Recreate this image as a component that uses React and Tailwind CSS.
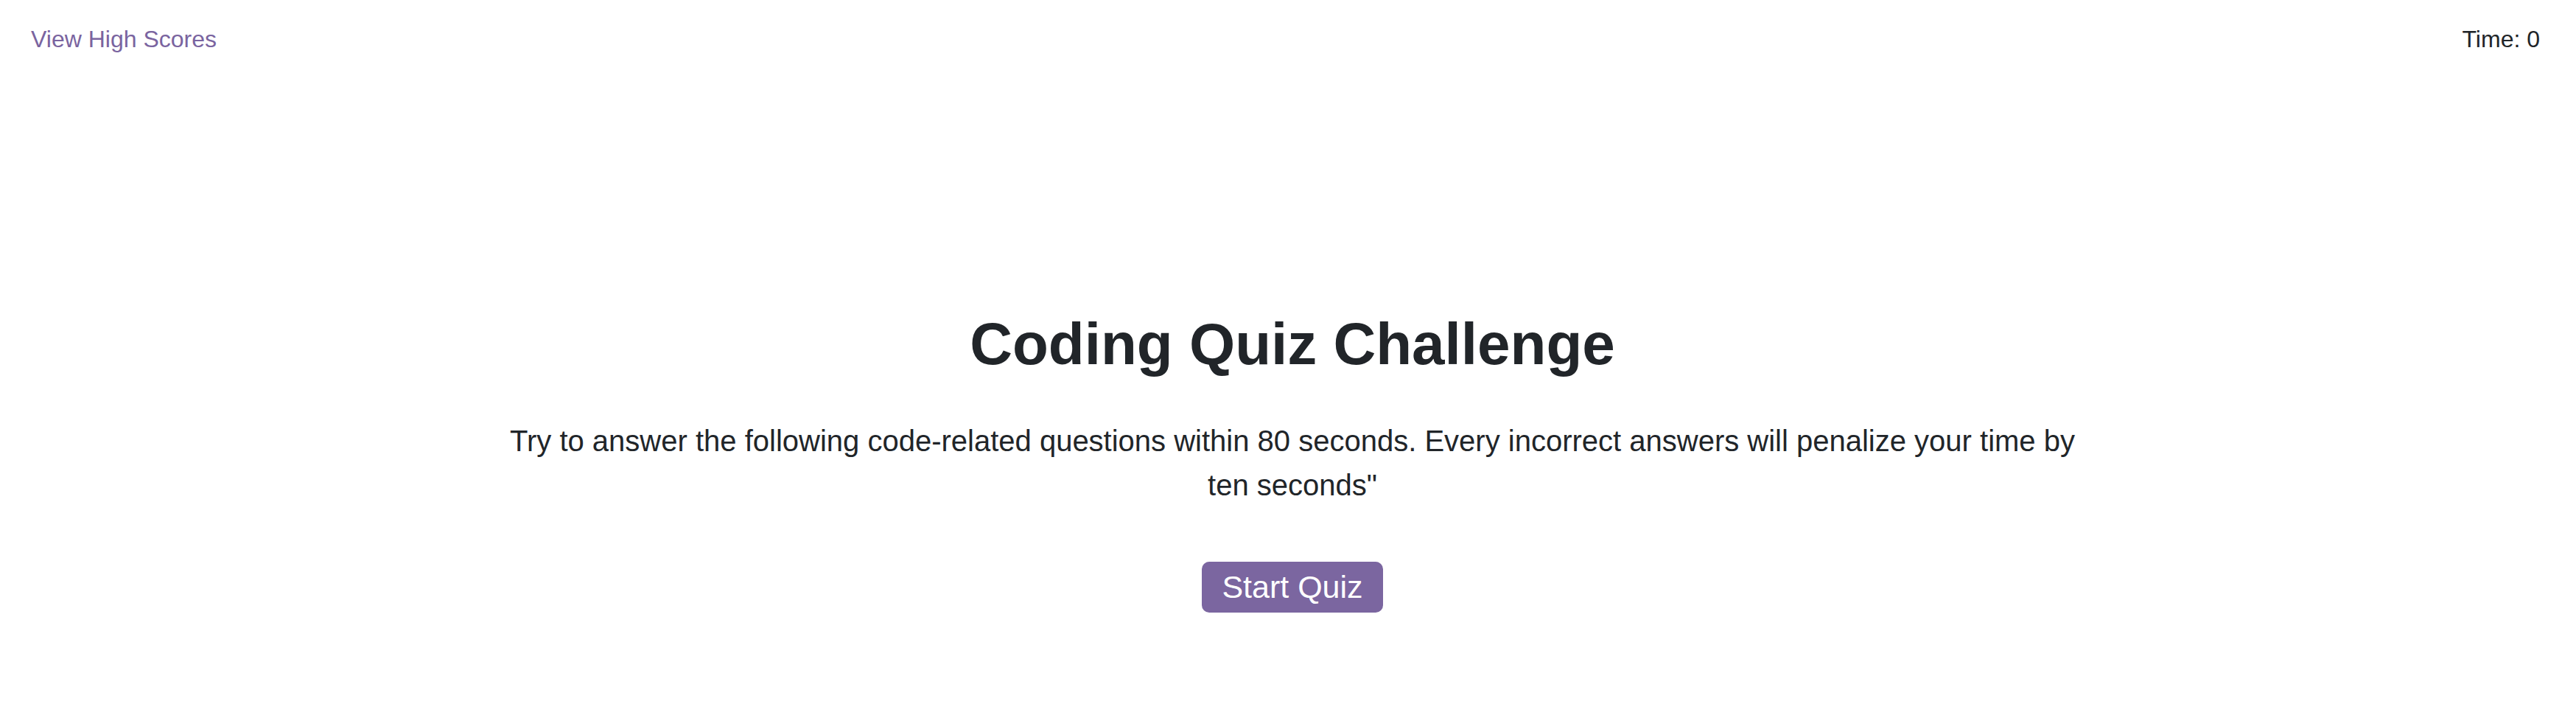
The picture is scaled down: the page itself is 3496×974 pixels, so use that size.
export default function App() {
  return (
    <div className="min-h-[974px] w-full bg-white text-[#212529]" style={{ fontFamily: '"Liberation Sans", Arial, sans-serif' }}>
      <header className="flex items-start justify-between pt-[29px] pl-[42px] pr-[49px]">
        <a href="#" className="text-[32px] leading-[48px] text-[#7a64a0] no-underline">View High Scores</a>
        <div className="text-[32px] leading-[48px]">Time: 0</div>
      </header>
      <main className="mt-[342px] flex flex-col items-center pl-[12px] text-center">
        <h1 className="text-[80px] leading-[96px] font-bold">Coding Quiz Challenge</h1>
        <p className="mt-[53px] max-w-[2180px] text-[40px] leading-[60px]">
          Try to answer the following code-related questions within 80 seconds. Every incorrect answers will penalize your time by ten seconds"
        </p>
        <button className="mt-[74px] rounded-[10px] bg-[#7b66a0] px-[27px] py-[8px] text-[43px] leading-[53px] text-white">
          Start Quiz
        </button>
      </main>
    </div>
  );
}
